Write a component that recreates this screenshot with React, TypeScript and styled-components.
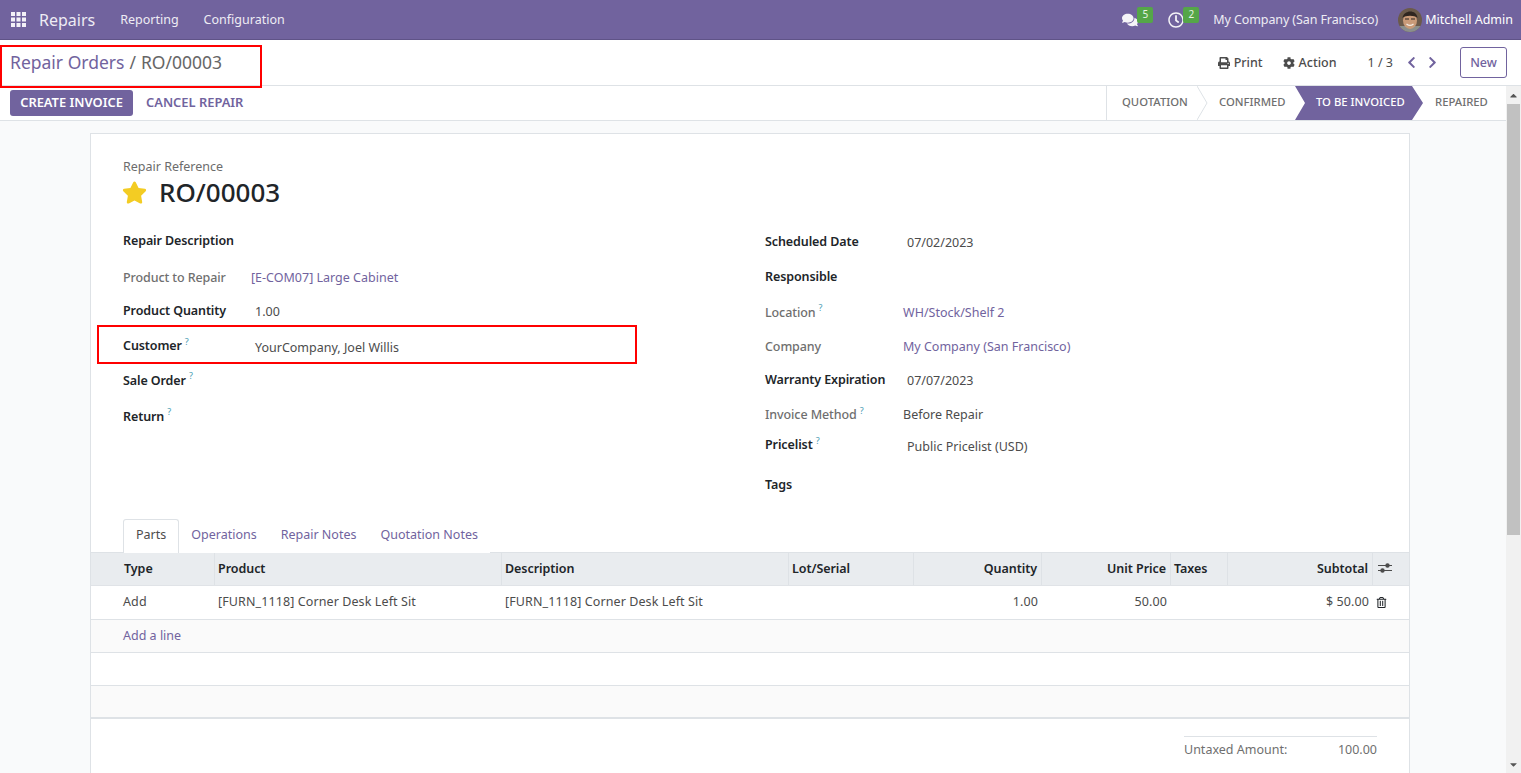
import React from 'react';
import styled, { createGlobalStyle } from 'styled-components';
import {
  FaCaretDown,
  FaCaretUp,
  FaChevronLeft,
  FaChevronRight,
  FaCog,
  FaComments,
  FaPrint,
  FaRegClock,
  FaRegTrashAlt,
  FaStar,
} from 'react-icons/fa';

const PURPLE = '#71639e';
const BORDER = '#dee2e6';
const FONT = '"Noto Sans", "Open Sans", sans-serif';

const GlobalStyle = createGlobalStyle`
  html, body {
    margin: 0;
    padding: 0;
    height: 100%;
    overflow: hidden;
  }
  body {
    font-family: ${FONT};
    font-size: 12.5px;
    color: #4c4c4c;
  }
  * {
    box-sizing: border-box;
  }
`;

const Page = styled.div`
  position: relative;
  display: flex;
  flex-direction: column;
  width: 1521px;
  height: 773px;
  overflow: hidden;
  background: #fff;
`;

// top navbar
const Navbar = styled.header`
  display: flex;
  align-items: center;
  flex: 0 0 40px;
  padding: 0 8px 0 11px;
  background: ${PURPLE};
  border-bottom: 1px solid #5f5387;
  color: #fff;
`;

const AppsIcon = styled.svg`
  width: 15px;
  height: 15px;
  fill: #f3f1f7;
  margin-right: 13px;
`;

const Brand = styled.span`
  font-size: 16px;
  color: #eeecf4;
  margin-right: 25px;
`;

const NavItem = styled.span`
  color: #eeecf4;
  margin-right: 25px;
`;

const NavCompany = styled(NavItem)`
  letter-spacing: -0.1px;
  margin-right: 20px;
`;

const NavSpacer = styled.div`
  flex: 1;
`;

const NavIcon = styled.span<{ $gap: number }>`
  position: relative;
  display: flex;
  align-items: center;
  width: 17px;
  margin-right: ${(props) => props.$gap}px;
  font-size: 16px;
  color: #f5f4f8;
`;

const Badge = styled.span`
  position: absolute;
  left: 15px;
  top: -5px;
  width: 16px;
  height: 16px;
  border-radius: 2px;
  background: #55a648;
  color: #e8f4e5;
  font-size: 10px;
  line-height: 14px;
  text-align: center;
`;

const Avatar = styled.svg`
  width: 24px;
  height: 24px;
  border-radius: 50%;
  margin-right: 3px;
`;

// breadcrumb row
const ControlPanel = styled.div`
  display: flex;
  align-items: center;
  flex: 0 0 46px;
  padding: 0 14px 0 10px;
  border-bottom: 1px solid ${BORDER};
`;

const Breadcrumb = styled.div`
  display: flex;
  gap: 5px;
  padding-bottom: 2px;
  font-size: 17.5px;
  color: ${PURPLE};
`;

const BreadcrumbCurrent = styled.span`
  color: #666;
`;

const PanelAction = styled.span`
  display: flex;
  align-items: center;
  gap: 4px;
  font-weight: 500;
  color: #4c4c4c;
  margin-right: 20px;

  svg {
    font-size: 12px;
  }
`;

const Pager = styled.span`
  margin-left: 11px;
  margin-right: 12px;
`;

const PagerArrow = styled.span`
  display: flex;
  color: ${PURPLE};
  font-size: 13px;
  margin-right: 8px;
`;

const NewButton = styled.button`
  width: 47px;
  height: 31px;
  margin-left: 13px;
  background: #fff;
  border: 1px solid ${PURPLE};
  border-radius: 3px;
  color: ${PURPLE};
  font-family: ${FONT};
  font-size: 12.5px;
  font-weight: 500;
`;

const Body = styled.div`
  display: flex;
  flex: 1;
  min-height: 0;
`;

const Main = styled.div`
  flex: 1;
  display: flex;
  flex-direction: column;
  min-width: 0;
`;

// status bar with the create invoice actions
const StatusBar = styled.div`
  display: flex;
  align-items: center;
  flex: 0 0 35px;
  padding-left: 10px;
  border-bottom: 1px solid ${BORDER};
`;

const PrimaryButton = styled.button`
  width: 123px;
  height: 26px;
  padding: 0 0 3px;
  background: ${PURPLE};
  border: 0;
  border-radius: 3px;
  color: #fff;
  font-family: ${FONT};
  font-size: 12.9px;
  font-weight: 600;
`;

const LinkButton = styled.span`
  margin-left: 13px;
  padding-bottom: 3px;
  color: ${PURPLE};
  font-weight: 600;
  font-size: 12.9px;
`;

const Steps = styled.div`
  display: flex;
  align-items: stretch;
  align-self: stretch;
  margin-left: auto;
  border-left: 1px solid ${BORDER};
`;

const Step = styled.span<{ $active?: boolean; $width: number; $pad: number }>`
  display: flex;
  align-items: center;
  width: ${(props) => props.$width}px;
  padding: 0 0 3px ${(props) => props.$pad}px;
  font-size: 11.3px;
  font-weight: 500;
  color: ${(props) => (props.$active ? '#fff' : '#6f6f6f')};
  background: ${(props) => (props.$active ? PURPLE : 'transparent')};
  clip-path: ${(props) =>
    props.$active
      ? 'polygon(0 0, calc(100% - 11px) 0, 100% 50%, calc(100% - 11px) 100%, 0 100%, 10px 50%)'
      : 'none'};
`;

const StepChevron = styled.svg`
  flex: 0 0 11px;
  width: 11px;
  height: 34px;
  fill: none;
  stroke: ${BORDER};
`;

const Scrollbar = styled.div`
  display: flex;
  flex-direction: column;
  align-items: center;
  flex: 0 0 15px;
  background: #f1f1f1;
  color: #555;
  font-size: 11px;
`;

const ScrollArrow = styled.span`
  display: flex;
  justify-content: center;
  height: 18px;
  padding-top: 4px;
`;

const ScrollThumb = styled.div`
  flex: 0 0 431px;
  width: 13px;
  background: #c1c1c1;
`;

const ScrollRest = styled.div`
  flex: 1;
`;

// the form sheet
const Content = styled.div`
  flex: 1;
  min-height: 0;
  padding: 12px 96px 0 90px;
  background: #f9fafb;
`;

const Sheet = styled.div`
  height: 720px;
  background: #fff;
  border: 1px solid ${BORDER};
`;

const TitleBlock = styled.div`
  padding: 25px 31px 0;
  height: 89px;
`;

const TitleLabel = styled.div`
  padding-left: 1px;
  color: #6c6c6c;
  line-height: 16px;
`;

const TitleRow = styled.div`
  display: flex;
  align-items: center;
  gap: 12px;
  margin-top: -1px;

  svg {
    color: #f3cc23;
    font-size: 25px;
  }
`;

const RecordName = styled.h1`
  margin: 0;
  font-size: 26px;
  line-height: 36px;
  font-weight: 500;
  color: #212529;
`;

const FormColumns = styled.div`
  display: grid;
  grid-template-columns: 642px 1fr;
  height: 296px;
  padding-left: 32px;
`;

const FormRow = styled.div<{ $height: number; $label: number }>`
  display: grid;
  grid-template-columns: ${(props) => props.$label}px 1fr;
  align-items: center;
  height: ${(props) => props.$height}px;
`;

const Label = styled.span<{ $muted?: boolean }>`
  font-weight: ${(props) => (props.$muted ? 500 : 600)};
  letter-spacing: -0.1px;
  color: ${(props) => (props.$muted ? '#6f6f6f' : '#212529')};
`;

const Help = styled.sup`
  margin-left: 3px;
  font-size: 9px;
  font-weight: 400;
  line-height: 0;
  color: #4a9db3;
`;

const Value = styled.span<{ $indent?: number; $link?: boolean; $drop?: number }>`
  padding-left: ${(props) => props.$indent || 0}px;
  padding-top: ${(props) => props.$drop || 0}px;
  color: ${(props) => (props.$link ? PURPLE : '#4c4c4c')};
`;

const Tabs = styled.nav`
  display: flex;
  height: 34px;
  padding-left: 32px;
  border-bottom: 1px solid ${BORDER};
`;

const Tab = styled.span<{ $active?: boolean }>`
  height: 34px;
  padding: 0 ${(props) => (props.$active ? 12 : 11)}px;
  line-height: 29px;
  color: ${(props) => (props.$active ? '#4c4c4c' : PURPLE)};
  background: #fff;
  border: 1px solid ${(props) => (props.$active ? BORDER : 'transparent')};
  border-bottom: 0;
  border-radius: 3px 3px 0 0;
`;

const COLUMNS = '124px 287px 287px 125px 128px 129px 57px 145px 1fr';

const HeaderRow = styled.div`
  display: grid;
  grid-template-columns: ${COLUMNS};
  height: 33px;
  background: #e9ecef;
  border-bottom: 1px solid #e0e3e7;
`;

const HeaderCell = styled.span<{ $right?: boolean; $first?: boolean }>`
  display: flex;
  align-items: center;
  justify-content: ${(props) => (props.$right ? 'flex-end' : 'flex-start')};
  padding: 0 4px 2px ${(props) => (props.$first ? 33 : 3)}px;
  font-weight: 600;
  letter-spacing: -0.05px;
  color: #212529;
  border-right: 1px solid ${BORDER};

  &:last-child {
    border-right: 0;
    padding-left: 5px;
  }
`;

const SettingsIcon = styled.svg`
  width: 14px;
  height: 12px;
  fill: #4c4c4c;
  stroke: #4c4c4c;
`;

const DataRow = styled.div`
  display: grid;
  grid-template-columns: ${COLUMNS};
  height: 34px;
  border-bottom: 1px solid ${BORDER};
`;

const DataCell = styled.span<{ $right?: boolean; $first?: boolean }>`
  display: flex;
  align-items: center;
  justify-content: ${(props) => (props.$right ? 'flex-end' : 'flex-start')};
  padding: 0 4px 2px ${(props) => (props.$first ? 32 : 3)}px;
  letter-spacing: 0.1px;
  color: #4c4c4c;
`;

const TrashCell = styled.span`
  display: flex;
  align-items: center;
  padding-left: 3px;
  color: #212529;
  font-size: 11px;
`;

const FillerRow = styled.div<{ $shaded?: boolean; $last?: boolean }>`
  display: flex;
  align-items: center;
  height: 33px;
  padding: 0 0 2px 32px;
  color: ${PURPLE};
  background: ${(props) => (props.$shaded ? '#fafafa' : '#fff')};
  border-bottom: ${(props) => (props.$last ? 2 : 1)}px solid ${BORDER};
`;

const Totals = styled.div`
  width: 193px;
  margin: 17px 0 0 1093px;
  padding-top: 4px;
  border-top: 1px solid ${BORDER};
  display: flex;
  justify-content: space-between;
  color: #6f6f6f;
`;

// red annotation frames drawn over the screenshot
const Annotation = styled.div<{ $x: number; $y: number; $w: number; $h: number }>`
  position: absolute;
  left: ${(props) => props.$x}px;
  top: ${(props) => props.$y}px;
  width: ${(props) => props.$w}px;
  height: ${(props) => props.$h}px;
  border: 2px solid #f00;
  pointer-events: none;
`;

const leftRows = [
  { label: 'Product to Repair', muted: true, value: '[E-COM07] Large Cabinet', link: true, height: 38, indent: 0 },
  { label: 'Product Quantity', value: '1.00', height: 29, indent: 4, drop: 2 },
  { label: 'Customer', help: true, value: 'YourCompany, Joel Willis', height: 41, indent: 4, drop: 4 },
  { label: 'Sale Order', help: true, height: 28 },
  { label: 'Return', help: true, height: 44 },
];

const rightRows = [
  { label: 'Scheduled Date', value: '07/02/2023', height: 36, indent: 4, drop: 2 },
  { label: 'Responsible', height: 35 },
  { label: 'Location', muted: true, help: true, value: 'WH/Stock/Shelf 2', link: true, height: 36 },
  { label: 'Company', muted: true, value: 'My Company (San Francisco)', link: true, height: 33 },
  { label: 'Warranty Expiration', value: '07/07/2023', height: 33, indent: 4, drop: 2 },
  { label: 'Invoice Method', muted: true, help: true, value: 'Before Repair', height: 37 },
  { label: 'Pricelist', help: true, value: 'Public Pricelist (USD)', height: 23, indent: 4, drop: 3 },
  { label: 'Tags', height: 57 },
];

const App = () => (
  <Page>
    <GlobalStyle />
    <Navbar>
      <AppsIcon viewBox="0 0 15 15">
        {[0, 5.5, 11].map((y) =>
          [0, 5.5, 11].map((x) => <rect key={`${x}-${y}`} x={x} y={y} width="4" height="4" />)
        )}
      </AppsIcon>
      <Brand>Repairs</Brand>
      <NavItem>Reporting</NavItem>
      <NavItem>Configuration</NavItem>
      <NavSpacer />
      <NavIcon $gap={29}>
        <FaComments />
        <Badge>5</Badge>
      </NavIcon>
      <NavIcon $gap={28}>
        <FaRegClock />
        <Badge>2</Badge>
      </NavIcon>
      <NavCompany>My Company (San Francisco)</NavCompany>
      <Avatar viewBox="0 0 24 24">
        <rect width="24" height="24" fill="#6b5a4a" />
        <rect y="18" width="24" height="6" fill="#8b8f8c" />
        <ellipse cx="12" cy="12.5" rx="7" ry="8.5" fill="#c99a78" />
        <path d="M4.5 10c1-8 14-9 15 0-3-3-12-3-15 0z" fill="#2f2620" />
        <path d="M7 11h4M13 11h4" stroke="#2f2620" strokeWidth="1.2" />
        <path d="M8.5 16c2.5 2 4.5 2 7 0" stroke="#f3e9e0" strokeWidth="1.3" fill="none" />
      </Avatar>
      <span>Mitchell Admin</span>
    </Navbar>

    <ControlPanel>
      <Breadcrumb>
        <span>Repair Orders</span>
        <BreadcrumbCurrent>/</BreadcrumbCurrent>
        <BreadcrumbCurrent>RO/00003</BreadcrumbCurrent>
      </Breadcrumb>
      <NavSpacer />
      <PanelAction>
        <FaPrint />
        Print
      </PanelAction>
      <PanelAction>
        <FaCog />
        Action
      </PanelAction>
      <Pager>1 / 3</Pager>
      <PagerArrow>
        <FaChevronLeft />
      </PagerArrow>
      <PagerArrow>
        <FaChevronRight />
      </PagerArrow>
      <NewButton>New</NewButton>
    </ControlPanel>

    <Body>
      <Main>
        <StatusBar>
          <PrimaryButton>CREATE INVOICE</PrimaryButton>
          <LinkButton>CANCEL REPAIR</LinkButton>
          <Steps>
            <Step $width={90} $pad={15}>
              QUOTATION
            </Step>
            <StepChevron viewBox="0 0 11 34">
              <polyline points="0,0 10,17 0,34" />
            </StepChevron>
            <Step $width={87} $pad={11}>
              CONFIRMED
            </Step>
            <Step $active $width={128} $pad={21}>
              TO BE INVOICED
            </Step>
            <Step $width={83} $pad={12}>
              REPAIRED
            </Step>
          </Steps>
        </StatusBar>
        <Content>
          <Sheet>
            <TitleBlock>
              <TitleLabel>Repair Reference</TitleLabel>
              <TitleRow>
                <FaStar />
                <RecordName>RO/00003</RecordName>
              </TitleRow>
            </TitleBlock>
            <FormColumns>
              <div>
                <FormRow $height={35} $label={132}>
                  <Label>Repair Description</Label>
                </FormRow>
                {leftRows.map((row) => (
                  <FormRow key={row.label} $height={row.height} $label={128}>
                    <Label $muted={row.muted}>
                      {row.label}
                      {row.help && <Help>?</Help>}
                    </Label>
                    {row.value && (
                      <Value $indent={row.indent} $link={row.link} $drop={row.drop}>
                        {row.value}
                      </Value>
                    )}
                  </FormRow>
                ))}
              </div>
              <div>
                {rightRows.map((row) => (
                  <FormRow key={row.label} $height={row.height} $label={138}>
                    <Label $muted={row.muted}>
                      {row.label}
                      {row.help && <Help>?</Help>}
                    </Label>
                    {row.value && (
                      <Value $indent={row.indent} $link={row.link} $drop={row.drop}>
                        {row.value}
                      </Value>
                    )}
                  </FormRow>
                ))}
              </div>
            </FormColumns>
            <Tabs>
              <Tab $active>Parts</Tab>
              <Tab>Operations</Tab>
              <Tab>Repair Notes</Tab>
              <Tab>Quotation Notes</Tab>
            </Tabs>
            <HeaderRow>
              <HeaderCell $first>Type</HeaderCell>
              <HeaderCell>Product</HeaderCell>
              <HeaderCell>Description</HeaderCell>
              <HeaderCell>Lot/Serial</HeaderCell>
              <HeaderCell $right>Quantity</HeaderCell>
              <HeaderCell $right>Unit Price</HeaderCell>
              <HeaderCell>Taxes</HeaderCell>
              <HeaderCell $right>Subtotal</HeaderCell>
              <HeaderCell>
                <SettingsIcon viewBox="0 0 14 12">
                  <path d="M0 3.5h14M0 8.5h14" strokeWidth="1" fill="none" />
                  <circle cx="9.5" cy="3.5" r="2.2" stroke="none" />
                  <circle cx="4.5" cy="8.5" r="2.2" stroke="none" />
                </SettingsIcon>
              </HeaderCell>
            </HeaderRow>
            <DataRow>
              <DataCell $first>Add</DataCell>
              <DataCell>[FURN_1118] Corner Desk Left Sit</DataCell>
              <DataCell>[FURN_1118] Corner Desk Left Sit</DataCell>
              <DataCell />
              <DataCell $right>1.00</DataCell>
              <DataCell $right>50.00</DataCell>
              <DataCell />
              <DataCell $right>$ 50.00</DataCell>
              <TrashCell>
                <FaRegTrashAlt />
              </TrashCell>
            </DataRow>
            <FillerRow $shaded>Add a line</FillerRow>
            <FillerRow />
            <FillerRow $shaded $last />
            <Totals>
              <span>Untaxed Amount:</span>
              <span>100.00</span>
            </Totals>
          </Sheet>
        </Content>
      </Main>
      <Scrollbar>
        <ScrollArrow>
          <FaCaretUp />
        </ScrollArrow>
        <ScrollThumb />
        <ScrollRest />
        <ScrollArrow>
          <FaCaretDown />
        </ScrollArrow>
      </Scrollbar>
    </Body>

    <Annotation $x={0} $y={45} $w={262} $h={43} />
    <Annotation $x={97} $y={325} $w={540} $h={39} />
  </Page>
);

export default App;
